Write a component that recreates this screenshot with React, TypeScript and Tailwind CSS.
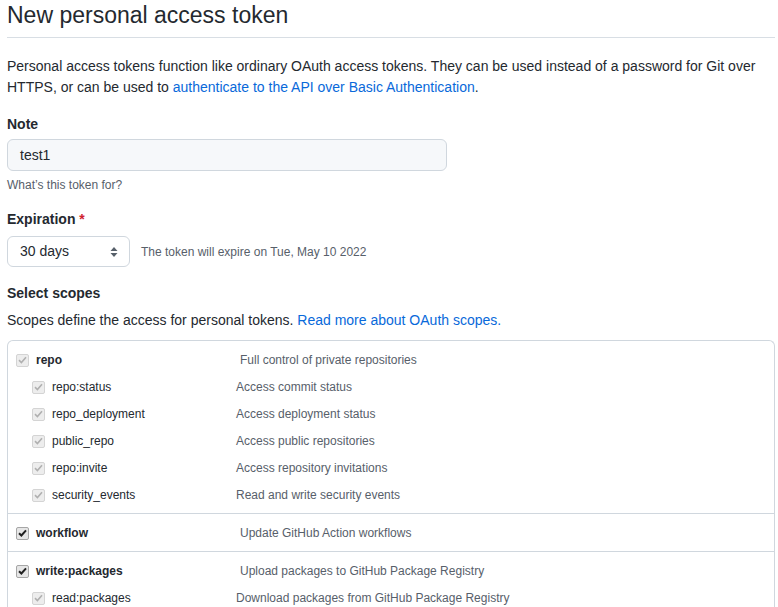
import React from 'react';

type Scope = {
  name: string;
  desc: string;
  checked: 'disabled' | 'on';
  children?: { name: string; desc: string }[];
};

const scopes: Scope[] = [
  {
    name: 'repo',
    desc: 'Full control of private repositories',
    checked: 'disabled',
    children: [
      { name: 'repo:status', desc: 'Access commit status' },
      { name: 'repo_deployment', desc: 'Access deployment status' },
      { name: 'public_repo', desc: 'Access public repositories' },
      { name: 'repo:invite', desc: 'Access repository invitations' },
      { name: 'security_events', desc: 'Read and write security events' },
    ],
  },
  { name: 'workflow', desc: 'Update GitHub Action workflows', checked: 'on' },
  {
    name: 'write:packages',
    desc: 'Upload packages to GitHub Package Registry',
    checked: 'on',
    children: [{ name: 'read:packages', desc: 'Download packages from GitHub Package Registry' }],
  },
];

function Check({ kind }: { kind: 'disabled' | 'on' }) {
  const dim = kind === 'disabled';
  return (
    <span
      className={
        'flex h-[13px] w-[13px] shrink-0 items-center justify-center rounded-[2px] border ' +
        (dim ? 'border-[#d4d4d4] bg-[#ededed]' : 'border-[#a6a6a6] bg-[#e6e6e6]')
      }
    >
      <svg width="9" height="8" viewBox="0 0 9 8">
        <path
          d="M1 4.2 L3.4 6.5 L8 1.3"
          fill="none"
          stroke={dim ? '#b0b0b0' : '#202020'}
          strokeWidth={dim ? 1.6 : 2}
        />
      </svg>
    </span>
  );
}

export default function App() {
  return (
    <div
      className="bg-white pl-[7px] pr-[3px] text-[14px] text-[#24292f]"
      style={{ fontFamily: '"Liberation Sans", Arial, sans-serif' }}
    >
      <h1 className="h-[38px] border-b border-[#d8dee4] text-[23px] leading-[30px] font-normal">
        New personal access token
      </h1>

      <p className="mt-[18px] leading-[21px]">
        Personal access tokens function like ordinary OAuth access tokens. They can be used instead of a password for Git over
        HTTPS, or can be used to{' '}
        <a className="text-[#0969da]">authenticate to the API over Basic Authentication</a>.
      </p>

      <div className="mt-[16px] leading-[21px] font-semibold">Note</div>
      <div className="mt-[4px] flex h-[32px] w-[440px] items-center rounded-md border border-[#d0d7de] bg-[#f6f8fa] px-3">
        test1
      </div>
      <div className="mt-[5px] text-[12px] leading-[18px] text-[#57606a]">What’s this token for?</div>

      <div className="mt-[15px] leading-[21px] font-semibold">
        Expiration <span className="text-[#cf222e]">*</span>
      </div>
      <div className="mt-[6px] flex items-center">
        <div className="flex h-[31px] w-[123px] items-center justify-between rounded-md border border-[#d0d7de] bg-white pr-[11px] pl-3">
          <span>30 days</span>
          <svg width="8" height="12" viewBox="0 0 8 12">
            <path d="M4 1 L7.5 5 H0.5 Z M4 11 L7.5 7 H0.5 Z" fill="#57606a" />
          </svg>
        </div>
        <span className="ml-[11px] text-[12px] text-[#57606a]">The token will expire on Tue, May 10 2022</span>
      </div>

      <div className="mt-[16px] leading-[21px] font-semibold">Select scopes</div>
      <p className="mt-[6px] leading-[21px]">
        Scopes define the access for personal tokens.{' '}
        <a className="text-[#0969da]">Read more about OAuth scopes.</a>
      </p>

      <div className="mt-[9px] rounded-t-md border border-b-0 border-[#d0d7de] text-[12px]">
        {scopes.map((s, i) => (
          <div
            key={s.name}
            className={'py-[5px] ' + (i < scopes.length - 1 ? 'border-b border-[#d0d7de]' : '')}
          >
            <div className="flex h-[27px] items-center pt-px pl-[8px]">
              <div className="flex w-[224px] items-center gap-[7px]">
                <Check kind={s.checked} />
                <span className="font-semibold">{s.name}</span>
              </div>
              <span className="text-[#57606a]">{s.desc}</span>
            </div>
            {s.children?.map((c) => (
              <div key={c.name} className="flex h-[27px] items-center pt-px pl-[24px]">
                <div className="flex w-[204px] items-center gap-[7px]">
                  <Check kind="disabled" />
                  <span>{c.name}</span>
                </div>
                <span className="text-[#57606a]">{c.desc}</span>
              </div>
            ))}
          </div>
        ))}
      </div>
    </div>
  );
}
